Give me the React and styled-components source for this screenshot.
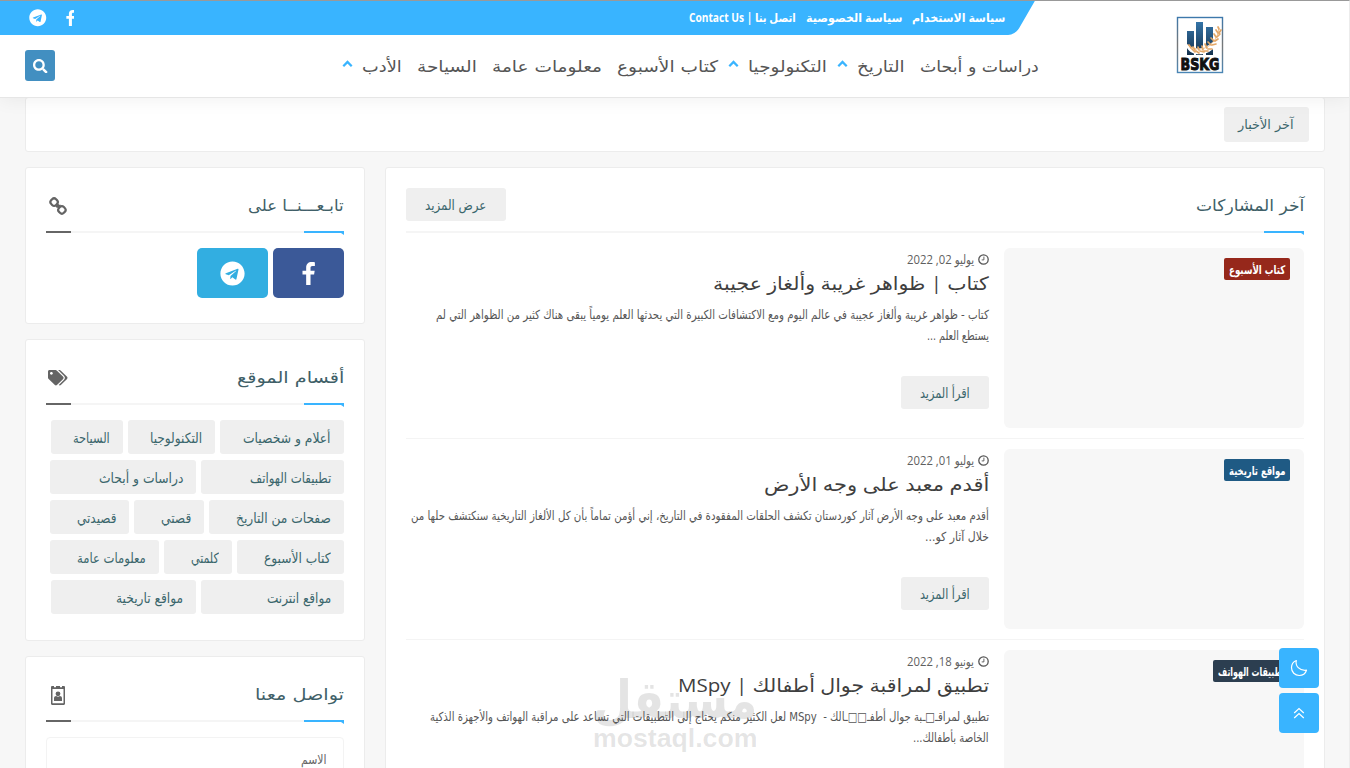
import React, { useLayoutEffect, useRef, useState } from 'react'
import styled, { createGlobalStyle } from 'styled-components'
import { FaTelegram, FaSearch, FaTags } from 'react-icons/fa'

const GlobalStyle = createGlobalStyle`
* {
  box-sizing: border-box;
}
body {
  margin: 0;
  background: #f7f7f7;
  font-family: "DejaVu Sans Condensed", "DejaVu Sans", sans-serif;
  overflow: hidden;
}
`

const Page = styled.div`
direction: rtl;
width: 1350px;
height: 768px;
overflow: hidden;
position: relative;
border-top: 1px solid #999;
border-right: 1px solid #ececec;
padding-right: 24px;
padding-left: 25px;
background: #f7f7f7;
`

const Header = styled.header`
display: flex;
position: relative;
z-index: 2;
height: 97px;
margin: 0 -24px -1px -25px;
padding-right: 24px;
background: #fff;
border-bottom: 1px solid #e6e6e6;
box-shadow: 0 2px 18px rgba(0, 0, 0, 0.06);
`

const LogoArea = styled.div`
width: 250px;
display: flex;
justify-content: center;
padding-top: 15px;
`

const HeaderBars = styled.div`
flex: 1;
margin-right: 35px;
`

const TopBar = styled.div`
position: relative;
display: flex;
align-items: center;
justify-content: space-between;
height: 34px;
padding: 0 35px 0 29px;
color: #fff;
&::before {
  content: "";
  position: absolute;
  top: 0;
  bottom: 0;
  left: -40px;
  right: 15px;
  background: #39b4ff;
  border-bottom-right-radius: 7px;
  transform: skewX(-30deg);
}
`

const TopLinks = styled.div`
display: flex;
position: relative;
gap: 10px;
margin-top: -1px;
font-family: "Open Sans", "DejaVu Sans", sans-serif;
font-size: 11.500px;
font-weight: bold;
line-height: 20px;
`

const TopSocial = styled.div`
display: flex;
position: relative;
align-items: center;
gap: 19px;
font-size: 17.500px;
`

const NavBar = styled.div`
display: flex;
justify-content: space-between;
height: 62px;
padding: 15px 0 0 25px;
`

const Nav = styled.nav`
display: flex;
height: 31px;
margin-right: 1px;
color: #555;
font-family: "DejaVu Sans", sans-serif;
font-size: 16px;
line-height: 34px;
`

const NavItem = styled.div`
display: flex;
margin-left: ${(props) => props.$gap}px;
svg {
  margin: 10px 9px 0 0;
}
`

const SearchButton = styled.button`
display: flex;
align-items: center;
justify-content: center;
width: 30px;
height: 31px;
padding: 1px 0 0 1px;
border: none;
border-radius: 3px;
background: #428fc1;
color: #fff;
font-size: 14.500px;
`

const Card = styled.section`
background: #fff;
border: 1px solid #ececec;
border-radius: 3px;
padding: ${(props) => props.$pad || '20px'};
height: ${(props) => (props.$height ? props.$height + 'px' : 'auto')};
`

const GreyButton = styled.button`
display: flex;
align-items: center;
justify-content: center;
width: ${(props) => props.$width}px;
height: ${(props) => props.$height || 33}px;
padding: ${(props) => props.$pad || 0};
border: none;
border-radius: 3px;
background: #efefef;
color: #3a666c;
font-family: inherit;
font-size: ${(props) => props.$size || 14}px;
`

const Columns = styled.div`
display: flex;
gap: 20px;
margin-top: 15px;
`

const Sidebar = styled.aside`
display: flex;
flex-direction: column;
gap: 15px;
width: 340px;
`

const SectionHead = styled.div`
display: flex;
position: relative;
justify-content: space-between;
height: 45px;
margin-bottom: 15px;
border-bottom: 2px solid #f5f5f5;
color: #646464;
&::before {
  content: "";
  position: absolute;
  right: 0;
  bottom: -4px;
  width: 40px;
  height: 4px;
  background: #39b4ff;
  clip-path: polygon(0 0, 100% 0, 100% 100%, 37px 50%, 0 50%);
}
&::after {
  content: "";
  position: absolute;
  left: 0;
  bottom: -2px;
  width: ${(props) => (props.$plain ? 0 : 25)}px;
  height: 2px;
  background: #666;
}
`

const SectionTitle = styled.h2`
margin: 0;
color: #3f5f68;
font-family: "DejaVu Sans", sans-serif;
font-size: 16px;
font-weight: normal;
line-height: 35px;
`

const IconSlot = styled.span`
display: flex;
align-items: center;
justify-content: center;
width: 24px;
height: 36px;
font-size: 19.500px;
`

const SocialRow = styled.div`
display: flex;
gap: 5px;
`

const SocialButton = styled.a`
display: flex;
align-items: center;
justify-content: center;
width: 71px;
height: 50px;
border-radius: 5px;
background: ${(props) => props.$color};
color: #fff;
font-size: 25px;
`

const TagRow = styled.div`
display: flex;
gap: 5px;
margin-bottom: 6px;
`

const Tag = styled.a`
width: ${(props) => props.$width}px;
height: 34px;
padding-right: 13px;
border-radius: 3px;
background: #efefef;
color: #3a666c;
font-size: 14px;
line-height: 37px;
`

const Field = styled.div`
height: 50px;
margin-top: 1px;
padding-right: 16px;
border: 1px solid #f3f3f3;
border-radius: 4px;
color: #666;
font-size: 13.500px;
line-height: 43px;
`

const Main = styled.main`
width: 940px;
`

const Article = styled.article`
display: flex;
gap: 15px;
height: 191px;
margin-bottom: 10px;
border-bottom: 1px solid #f4f4f4;
`

const Thumb = styled.div`
width: 300px;
height: 180px;
padding: 10px 14px 0 0;
border-radius: 6px;
background: #f7f7f7;
`

const Badge = styled.span`
display: flex;
justify-content: center;
width: ${(props) => props.$width}px;
height: 22px;
border-radius: 2px;
background: ${(props) => props.$color};
color: #fff;
font-size: 12px;
font-weight: bold;
line-height: 25px;
`

const Body = styled.div`
flex: 1;
`

const DateLine = styled.div`
display: flex;
align-items: center;
gap: 4px;
height: 24px;
color: #5f5f5f;
font-family: "Open Sans", "DejaVu Sans Condensed", sans-serif;
font-size: 12.500px;
line-height: 26px;
svg {
  margin-top: -1px;
}
`

const Title = styled.h3`
margin: 0;
height: 24px;
color: #3f3f3f;
font-family: "Open Sans", "DejaVu Sans", sans-serif;
font-size: 18.500px;
font-weight: normal;
line-height: 22px;
`

const Excerpt = styled.div`
height: 80px;
padding-top: 8px;
color: #565656;
font-family: "DejaVu Sans Condensed", "DejaVu Sans", sans-serif;
font-size: 12.500px;
line-height: 22px;
`

const Line = styled.div`
display: flex;
height: 21px;
`

const FloatingButtons = styled.div`
position: absolute;
z-index: 3;
top: 647px;
right: 30px;
display: flex;
flex-direction: column;
gap: 5px;
`

const FloatingButton = styled.button`
display: flex;
align-items: center;
justify-content: center;
width: 40px;
height: 40px;
padding: 0;
border: none;
border-radius: 4px;
background: #39b4ff;
`

const Watermark = styled.div`
position: absolute;
z-index: 1;
top: 661px;
left: 593px;
width: 164px;
color: rgba(90, 90, 90, 0.16);
font-weight: bold;
pointer-events: none;
`

const WatermarkName = styled.div`
height: 61px;
font-family: "DejaVu Sans", sans-serif;
font-size: 52px;
line-height: 76px;
`

const WatermarkSite = styled.div`
direction: ltr;
font-family: "Liberation Sans", sans-serif;
font-size: 26px;
line-height: 30px;
`

const FitBox = styled.span`
display: inline-block;
flex: none;
white-space: nowrap;
vertical-align: top;
`

const FitText = styled.span`
display: inline-block;
transform-origin: ${(props) => (props.$ltr ? 'left' : 'right')} center;
`

// keeps a label at a fixed width whatever Arabic font is installed
const Fit = ({ w, ltr, children }) => {
  const ref = useRef(null)
  const [scale, setScale] = useState(1)
  useLayoutEffect(() => {
    setScale(w / ref.current.offsetWidth)
  }, [w, children])
  return (
    <FitBox style={{ width: w }}>
      <FitText ref={ref} $ltr={ltr} style={{ transform: `scaleX(${scale})` }}>{children}</FitText>
    </FitBox>
  )
}

const FacebookF = ({ height }) => (
  <svg width={height * 0.56} height={height} viewBox="0 0 13 23" fill="#fff">
    <path d="M13 .2v3.700h-2.300c-1.700 0-2.100.9-2.100 2.100v2.600h4.200l-.6 4H8.600V23H4.200V12.600H.5v-4h3.700V5.500C4.200 2 6.400 0 9.700 0c1.500 0 2.900.1 3.300.2z" />
  </svg>
)

const CaretUp = () => (
  <svg width="11" height="8" viewBox="0 0 11 8" fill="none" stroke="#39b4ff" strokeWidth="2.3">
    <path d="M1.3 6.2 5.5 2l4.2 4.2" />
  </svg>
)

const Clock = () => (
  <svg width="11" height="11" viewBox="0 0 11 11" fill="none" stroke="#555">
    <circle cx="5.5" cy="5.5" r="4.7" strokeWidth="1.3" />
    <path d="M5.9 2.6v3.3H3.7" strokeWidth="0.9" />
  </svg>
)

const Chain = () => (
  <svg width="18" height="18" viewBox="0 0 18 18" fill="none" stroke="#646464" strokeWidth="2.2">
    <rect x="1.700" y="1.700" width="6.800" height="6.800" rx="2.800" transform="rotate(45 5.1 5.1)" />
    <rect x="9.500" y="9.500" width="6.800" height="6.800" rx="2.800" transform="rotate(45 12.9 12.9)" />
    <path d="m6.800 9.600 1.800-.6.600-2M9 11l.600-2 2-.6" strokeWidth="1.800" />
  </svg>
)

const ContactCard = () => (
  <svg width="14" height="19" viewBox="0 0 14 19" fill="#646464">
    <path d="M0 1.200C0 .5.500 0 1.200 0H3v1.200h2V0h4v1.200h2V0h1.800c.7 0 1.200.5 1.200 1.200v16.600c0 .7-.5 1.200-1.200 1.200H1.200C.5 19 0 18.500 0 17.800zM1.500 3v14.300h11V3z" fillRule="evenodd" />
    <circle cx="7" cy="7.800" r="2.400" />
    <path d="M3 15v-2.500c0-1.600 1-2.400 2.200-2.400 1 .8 2.600.8 3.600 0 1.200 0 2.200.8 2.200 2.400V15z" />
  </svg>
)

const Moon = () => (
  <svg width="18" height="18" viewBox="0 0 18 18" fill="none" stroke="#fff" strokeWidth="1.2" strokeLinejoin="round">
    <path d="M6.3 1.5C5 6.8 9.3 12 16.5 11.200c-1 3.200-4 5.300-7.300 5.300A7.700 7.700 0 0 1 1.500 8.800C1.500 5.500 3.400 2.600 6.300 1.500z" />
  </svg>
)

const DoubleUp = () => (
  <svg width="12" height="12" viewBox="0 0 12 12" fill="none" stroke="#fff" strokeWidth="1.2">
    <path d="M1.200 6 6 1.500 10.800 6M1.200 11 6 6.500 10.800 11" />
  </svg>
)

const Logo = () => (
  <svg width="48" height="58" viewBox="0 0 48 58" direction="ltr">
    <defs>
      <linearGradient id="bars" x1="0" y1="0" x2="0" y2="1">
        <stop offset="0" stopColor="#3474a8" />
        <stop offset="1" stopColor="#15324e" />
      </linearGradient>
      <linearGradient id="frame" x1="0" y1="0" x2="0" y2="1">
        <stop offset="0" stopColor="#3d78ab" />
        <stop offset="0.5" stopColor="#777" />
        <stop offset="1" stopColor="#4a86b5" />
      </linearGradient>
    </defs>
    <rect x="1.500" y="1.500" width="45" height="55" fill="#fff" stroke="url(#frame)" strokeWidth="1.400" />
    <path d="M11 15h7v24h-7zM20 6h7v33h-7zM30 11h7v28h-7z" fill="url(#bars)" />
    <path d="M10 27c5 6 14 7 21 3 7-4 11-9 11-18l3-1c1 12-4 20-12 25-8 4-18 3-22-4z" fill="#fff" />
    <g stroke="#e3a767" strokeWidth="1.700" fill="none" strokeLinecap="round">
      <path d="M12 29c7 6 16 5 22 0 5-4 8-9 9-16" strokeWidth="0.700" />
      <path d="m15 32-2-3M19 34l-2-3M23 34l-1-3M27 34l-1-4M31 32l-2-4M35 29l-3-3M38 25l-3-3M40 21l-2-3M42 17l-2-3M43 13l-1-2" />
      <path d="m16 33 3 3M20 35l3 2M24 35l4 1M28 35l4 0M32 33l4 0M36 29l4-1M39 25l3-2M41 21l3-3M43 17l2-3" />
    </g>
    <text x="4.500" y="54" textLength="39" lengthAdjust="spacingAndGlyphs" fontFamily="DejaVu Sans" fontSize="16" fontWeight="bold" fill="#111" stroke="#111" strokeWidth="1">BSKG</text>
  </svg>
)

const navItems = [
  { text: 'دراسات و أبحاث', w: 119, gap: 15 },
  { text: 'التاريخ', w: 48, gap: 10, menu: true },
  { text: 'التكنولوجيا', w: 79, gap: 10, menu: true },
  { text: 'كتاب الأسبوع', w: 101, gap: 15 },
  { text: 'معلومات عامة', w: 110, gap: 15 },
  { text: 'السياحة', w: 60, gap: 15 },
  { text: 'الأدب', w: 40, gap: 0, menu: true }
]

// [label, text width, box width]
const tagRows = [
  [['أعلام و شخصيات', 88, 124], ['التكنولوجيا', 52, 87], ['السياحة', 37, 72]],
  [['تطبيقات الهواتف', 81, 143], ['دراسات و أبحاث', 84, 146]],
  [['صفحات من التاريخ', 95, 135], ['قصتي', 30, 70], ['قصيدتي', 39, 79]],
  [['كتاب الأسبوع', 67, 107], ['كلمتي', 28, 68], ['معلومات عامة', 69, 109]],
  [['مواقع انترنت', 64, 143], ['مواقع تاريخية', 67, 145]]
]

const articles = [
  {
    badge: 'كتاب الأسبوع',
    badgeWidth: 66,
    color: '#96281b',
    date: 'يوليو 02, 2022',
    title: 'كتاب | ظواهر غريبة وألغاز عجيبة',
    titleWidth: 276,
    lines: [
      ['كتاب - ظواهر غريبة وألغاز عجيبة في عالم اليوم ومع الاكتشافات الكبيرة التي يحدثها العلم يومياً يبقى هناك كثير من الظواهر التي لم', 553],
      ['يستطع العلم ...', 62]
    ]
  },
  {
    badge: 'مواقع تاريخية',
    badgeWidth: 66,
    color: '#1f5a84',
    date: 'يوليو 01, 2022',
    title: 'أقدم معبد على وجه الأرض',
    titleWidth: 225,
    lines: [
      ['أقدم معبد على وجه الأرض آثار كوردستان تكشف الحلقات المفقودة في التاريخ، إني أؤمن تماماً بأن كل الألغاز التاريخية سنكتشف حلها من', 578],
      ['خلال آثار كو...', 64]
    ]
  },
  {
    badge: 'تطبيقات الهواتف',
    badgeWidth: 77,
    color: '#2c3e50',
    date: 'يونيو 18, 2022',
    title: 'تطبيق لمراقبة جوال أطفالك | MSpy',
    titleWidth: 311,
    lines: [
      ['تطبيق لمراقـ□ـبة جوال أطفـ□□ـالك -\u00a0 MSpy لعل الكثير منكم يحتاج إلى التطبيقات التي تساعد على مراقبة الهواتف والأجهزة الذكية', 559],
      ['الخاصة بأطفالك...', 76]
    ]
  }
]

export default function App() {
  return (
    <Page>
      <GlobalStyle />
      <Header>
        <LogoArea>
          <Logo />
        </LogoArea>
        <HeaderBars>
          <TopBar>
            <TopLinks>
              <Fit w={93}>سياسة الاستخدام</Fit>
              <Fit w={96}>سياسة الخصوصية</Fit>
              <Fit w={107}>اتصل بنا | Contact Us</Fit>
            </TopLinks>
            <TopSocial>
              <FacebookF height={16} />
              <FaTelegram />
            </TopSocial>
          </TopBar>
          <NavBar>
            <Nav>
              {navItems.map((item) => (
                <NavItem key={item.text} $gap={item.gap}>
                  <Fit w={item.w}>{item.text}</Fit>
                  {item.menu && <CaretUp />}
                </NavItem>
              ))}
            </Nav>
            <SearchButton>
              <FaSearch />
            </SearchButton>
          </NavBar>
        </HeaderBars>
      </Header>

      <Card $height={55} $pad="9px 15px">
        <GreyButton $width={85} $height={35} $size={13} $pad="0 0 0 3px">
          <Fit w={56}>آخر الأخبار</Fit>
        </GreyButton>
      </Card>

      <Columns>
        <Main>
          <Card $height={640}>
            <SectionHead $plain>
              <SectionTitle><Fit w={108}>آخر المشاركات</Fit></SectionTitle>
              <GreyButton $width={100}>
                <Fit w={61}>عرض المزيد</Fit>
              </GreyButton>
            </SectionHead>
            {articles.map((article) => (
              <Article key={article.title}>
                <Thumb>
                  <Badge $width={article.badgeWidth} $color={article.color}>
                    <Fit w={article.badgeWidth - 10}>{article.badge}</Fit>
                  </Badge>
                </Thumb>
                <Body>
                  <DateLine>
                    <Clock />
                    <Fit w={67}>{article.date}</Fit>
                  </DateLine>
                  <Title><Fit w={article.titleWidth}>{article.title}</Fit></Title>
                  <Excerpt>
                    {article.lines.map(([text, w]) => (
                      <Line key={text}><Fit w={w}>{text}</Fit></Line>
                    ))}
                  </Excerpt>
                  <GreyButton $width={88}>
                    <Fit w={50}>اقرأ المزيد</Fit>
                  </GreyButton>
                </Body>
              </Article>
            ))}
          </Card>
        </Main>

        <Sidebar>
          <Card $height={157}>
            <SectionHead>
              <SectionTitle><Fit w={96}>تابـعـــنــا على</Fit></SectionTitle>
              <IconSlot><Chain /></IconSlot>
            </SectionHead>
            <SocialRow>
              <SocialButton $color="#3b5998"><FacebookF height={23} /></SocialButton>
              <SocialButton $color="#32aee1"><FaTelegram /></SocialButton>
            </SocialRow>
          </Card>

          <Card $height={302}>
            <SectionHead>
              <SectionTitle><Fit w={107}>أقسام الموقع</Fit></SectionTitle>
              <IconSlot><FaTags /></IconSlot>
            </SectionHead>
            {tagRows.map((row, index) => (
              <TagRow key={index}>
                {row.map(([text, w, width]) => (
                  <Tag key={text} $width={width}><Fit w={w}>{text}</Fit></Tag>
                ))}
              </TagRow>
            ))}
          </Card>

          <Card $height={200}>
            <SectionHead>
              <SectionTitle><Fit w={89}>تواصل معنا</Fit></SectionTitle>
              <IconSlot><ContactCard /></IconSlot>
            </SectionHead>
            <Field><Fit w={26}>الاسم</Fit></Field>
          </Card>
        </Sidebar>
      </Columns>

      <Watermark>
        <WatermarkName><Fit w={164}>مستقل</Fit></WatermarkName>
        <WatermarkSite><Fit w={164} ltr>mostaql.com</Fit></WatermarkSite>
      </Watermark>

      <FloatingButtons>
        <FloatingButton><Moon /></FloatingButton>
        <FloatingButton><DoubleUp /></FloatingButton>
      </FloatingButtons>
    </Page>
  )
}
